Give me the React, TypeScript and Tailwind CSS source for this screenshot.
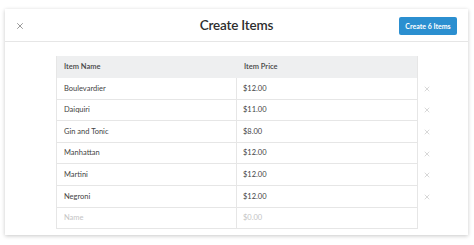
import { X } from "lucide-react";

const items = [
  { name: "Boulevardier", price: "$12.00" },
  { name: "Daiquiri", price: "$11.00" },
  { name: "Gin and Tonic", price: "$8.00" },
  { name: "Manhattan", price: "$12.00" },
  { name: "Martini", price: "$12.00" },
  { name: "Negroni", price: "$12.00" },
];

export default function App() {
  return (
    <div className="w-[474px] h-[245px] bg-white pt-[9px] px-[5px] font-['Lato',sans-serif] text-[#333]">
      <div className="w-[463px] h-[226px] bg-white shadow-[0_1px_4px_rgba(0,0,0,0.22)]">
        {/* Header */}
        <div className="relative h-[33px] flex items-center justify-center border-b border-[#e6e6e6]">
          <button className="absolute left-[10px] top-[12px] text-[#666]">
            <X className="w-[10px] h-[10px]" strokeWidth={1.6} />
          </button>
          <h1 className="text-[13.5px] font-semibold tracking-[-0.2px] text-[#2e2e2e]">Create Items</h1>
          <button className="absolute right-[11px] top-[8px] w-[58px] h-[18px] rounded-[2px] bg-[#2b8fd0] text-white text-[7px] font-bold">
            Create 6 Items
          </button>
        </div>

        {/* Table */}
        <div className="pl-[51px] pt-[14px]">
          <div className="flex flex-col">
            <div className="flex">
              <div className="w-[362px] h-[22px] grid grid-cols-2 bg-[#eeeff0] border-x border-[#e6e6e6] text-[7.5px] font-semibold text-[#444] items-center">
                <div className="pl-[7px]">Item Name</div>
                <div className="pl-[7px]">Item Price</div>
              </div>
            </div>
            {items.map((item) => (
              <div key={item.name} className="flex items-center">
                <div className="w-[362px] h-[21.6px] grid grid-cols-2 border-x border-b border-[#e6e6e6] text-[7.5px] text-[#444]">
                  <div className="pl-[7px] flex items-center border-r border-[#e6e6e6]">{item.name}</div>
                  <div className="pl-[6px] flex items-center">{item.price}</div>
                </div>
                <X className="ml-[5px] w-[8px] h-[8px] text-[#aaa]" strokeWidth={1.4} />
              </div>
            ))}
            <div className="flex">
              <div className="w-[362px] h-[21.6px] grid grid-cols-2 border-x border-b border-[#e6e6e6] text-[7.5px] text-[#c4c4c4]">
                <div className="pl-[7px] flex items-center border-r border-[#e6e6e6]">Name</div>
                <div className="pl-[6px] flex items-center">$0.00</div>
              </div>
            </div>
          </div>
        </div>
      </div>
    </div>
  );
}
